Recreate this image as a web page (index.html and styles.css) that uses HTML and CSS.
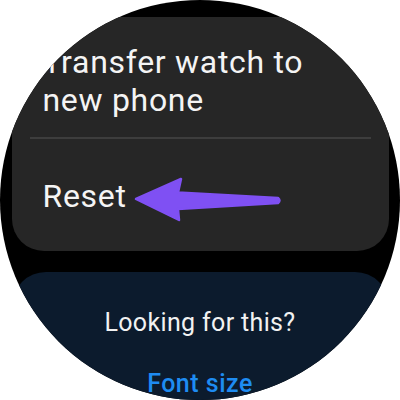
FILE: index.html
```html
<!DOCTYPE html>
<html lang="en">
<head>
    <meta charset="UTF-8">
    <meta name="viewport" content="width=device-width, initial-scale=1.0">
    <title>Watch settings</title>
    <link rel="stylesheet" href="styles.css">
</head>
<body>
    <div class="watch">
        <div class="card card--menu">
            <div class="menu-item menu-item--first">Transfer watch to new phone</div>
            <div class="divider"></div>
            <div class="menu-item menu-item--reset">Reset</div>
        </div>

        <div class="card card--hint">
            <p class="hint-title">Looking for this?</p>
            <p class="hint-link">Font size</p>
        </div>

        <!-- annotation arrow -->
        <svg class="pointer" viewBox="0 0 400 400" width="400" height="400">
            <path d="M136 199 L181 179 L178 192.5 L278 198 Q281 200.5 278 203 L178 209 L179 220 Z"
                  fill="#7f50f3" stroke="#7f50f3" stroke-width="2.5" stroke-linejoin="round"/>
        </svg>
    </div>
</body>
</html>
```

FILE: styles.css
```css
body {
    margin: 0;
    background: #fff;
    font-family: Roboto, "Liberation Sans", sans-serif;
}

.watch {
    position: relative;
    width: 400px;
    height: 400px;
    border-radius: 50%;
    overflow: hidden;
    background: #000;
    display: flex;
    flex-direction: column;
    align-items: center;
    gap: 21px;
    padding-top: 17px;
    box-sizing: border-box;
}

.card {
    width: 377px;
    flex-shrink: 0;
    box-sizing: border-box;
}

.card--menu {
    background: #262626;
    border-radius: 0 0 32px 32px;
    padding: 26px 0 36px;
}

.menu-item {
    color: #f4f4f4;
    font-size: 32px;
    letter-spacing: 0.7px;
    line-height: 38px;
    padding: 0 31px;
}

.menu-item--first {
    padding-right: 50px;
}

.menu-item--reset {
    margin-top: -2px;
}

.divider {
    height: 2px;
    margin: 18px 18px 40px;
    background: #3d3d3d;
}

.card--hint {
    background: #0c1b2d;
    border-radius: 34px 34px 0 0;
    padding-top: 36px;
    height: 200px;
    text-align: center;
}

.hint-title {
    margin: 0;
    color: #f2f2f2;
    font-size: 25px;
    letter-spacing: 0.35px;
    line-height: 30px;
}

.hint-link {
    margin: 31px 0 0;
    color: #1e8cf2;
    font-size: 25px;
    font-weight: 500;
    letter-spacing: 0.5px;
    line-height: 30px;
}

.pointer {
    position: absolute;
    top: 0;
    left: 0;
    pointer-events: none;
}
```
